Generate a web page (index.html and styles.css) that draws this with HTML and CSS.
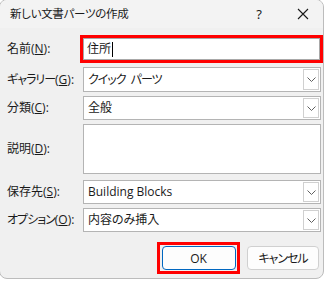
FILE: index.html
```html
<!DOCTYPE html>
<html lang="ja">
<head>
<meta charset="utf-8">
<link rel="stylesheet" href="styles.css">
</head>
<body>
<div class="window">
  <div class="titlebar">
    <span class="title">新しい文書パーツの作成</span>
    <span class="help">?</span>
    <span class="close">
      <svg width="12" height="12" viewBox="0 0 12 12"><path d="M1 1 L11 11 M11 1 L1 11" stroke="#1a1a1a" stroke-width="1.1" fill="none"/></svg>
    </span>
  </div>
  <div class="form">
    <div class="row r-name">
      <span class="label">名前(<u>N</u>):</span>
      <div class="hl-name">
        <div class="textbox"><span class="value">住所</span><span class="caret"></span></div>
      </div>
    </div>
    <div class="row r-gallery">
      <span class="label"><span class="kana">ギャラリー</span>(<u>G</u>):</span>
      <div class="combo"><span class="value kana">クイック パーツ</span><span class="drop"><svg width="9" height="5" viewBox="0 0 9 5"><path d="M0.5 0.5 L4.5 4.5 L8.5 0.5" stroke="#606060" fill="none" stroke-width="1"/></svg></span></div>
    </div>
    <div class="row r-cat">
      <span class="label">分類(<u>C</u>):</span>
      <div class="combo"><span class="value">全般</span><span class="drop"><svg width="9" height="5" viewBox="0 0 9 5"><path d="M0.5 0.5 L4.5 4.5 L8.5 0.5" stroke="#606060" fill="none" stroke-width="1"/></svg></span></div>
    </div>
    <div class="row r-desc">
      <span class="label">説明(<u>D</u>):</span>
      <div class="textarea"></div>
    </div>
    <div class="row r-save">
      <span class="label">保存先(<u>S</u>):</span>
      <div class="combo"><span class="value">Building Blocks</span><span class="drop"><svg width="9" height="5" viewBox="0 0 9 5"><path d="M0.5 0.5 L4.5 4.5 L8.5 0.5" stroke="#606060" fill="none" stroke-width="1"/></svg></span></div>
    </div>
    <div class="row r-opt">
      <span class="label"><span class="kana">オプション</span>(<u>O</u>):</span>
      <div class="combo"><span class="value">内容のみ挿入</span><span class="drop"><svg width="9" height="5" viewBox="0 0 9 5"><path d="M0.5 0.5 L4.5 4.5 L8.5 0.5" stroke="#606060" fill="none" stroke-width="1"/></svg></span></div>
    </div>
    <div class="buttons">
      <div class="hl-ok"><div class="btn ok">OK</div></div>
      <div class="btn cancel"><span class="kana">キャンセル</span></div>
    </div>
  </div>
</div>
</body>
</html>
```
FILE: styles.css
```css
html, body {
  margin: 0;
  padding: 0;
  background: #ffffff;
}
body {
  width: 328px;
  height: 281px;
  overflow: hidden;
  font-family: "Open Sans", "Noto Sans CJK JP", sans-serif;
  font-size: 12px;
  color: #1a1a1a;
  font-feature-settings: "palt";
}
.window {
  margin: -1px 0 0 -1px;
  width: 325px;
  height: 280px;
  box-sizing: border-box;
  border: 1px solid #bcbcbc;
  border-radius: 8px;
  background: #f0f0f0;
  overflow: hidden;
}
.titlebar {
  height: 28px;
  display: flex;
  align-items: center;
  background: #f3f3f3;
}
.title {
  margin-left: 10px;
  flex: 1;
  font-size: 11.5px;
  letter-spacing: -0.3px;
  line-height: 14px;
}
.help {
  width: 14px;
  text-align: center;
  font-family: "Noto Sans", sans-serif;
  font-size: 13px;
  margin-right: 31px;
}
.close {
  width: 12px;
  height: 12px;
  margin-right: 14px;
  display: flex;
}
.form {
  padding-top: 7px;
  display: flex;
  flex-direction: column;
}
.row {
  display: flex;
  align-items: center;
}
.label {
  width: 73px;
  padding-left: 7px;
  line-height: 14px;
  white-space: nowrap;
}
.kana {
  letter-spacing: -1px;
  word-spacing: 3px;
}
.r-name { height: 28px; }
.r-gallery { height: 25px; margin-top: 4px; }
.r-cat { height: 24px; margin-top: 4px; }
.r-desc { height: 50px; margin-top: 4px; }
.r-save { height: 24px; margin-top: 6px; }
.r-opt { height: 24px; margin-top: 4px; }
.hl-name {
  width: 243px;
  height: 28px;
  box-sizing: border-box;
  border: 3px solid #ff0000;
}
.textbox {
  height: 100%;
  box-sizing: border-box;
  border: 1px solid #a8a8a8;
  background: #ffffff;
  display: flex;
  align-items: center;
  padding-left: 3px;
}
.caret {
  width: 1px;
  height: 15px;
  background: #000000;
  margin-left: 1px;
}
.combo, .textarea {
  margin-left: 3px;
  width: 238px;
  height: 100%;
  box-sizing: border-box;
  border: 1px solid #b4b4b4;
  background: #ffffff;
}
.combo {
  display: flex;
  align-items: center;
  padding-left: 4px;
}
.value {
  flex: 0 0 auto;
  line-height: 14px;
}
.combo .value { flex: 1; }
.drop {
  width: 16px;
  height: calc(100% - 2px);
  margin-right: 1px;
  box-sizing: border-box;
  border: 1px solid #d0d0d0;
  background: #ffffff;
  display: flex;
  align-items: center;
  justify-content: center;
}
.buttons {
  margin-top: 10px;
  display: flex;
  align-items: center;
  padding-left: 157px;
}
.hl-ok {
  width: 83px;
  height: 32px;
  box-sizing: border-box;
  border: 3px solid #ff0000;
  display: flex;
  align-items: center;
  justify-content: center;
}
.btn {
  height: 24px;
  box-sizing: border-box;
  border-radius: 4px;
  display: flex;
  align-items: center;
  justify-content: center;
  background: #fdfdfd;
}
.ok {
  width: 74px;
  border: 1px solid #0067c0;
}
.cancel {
  width: 72px;
  margin-left: 7px;
  border: 1px solid #d0d0d0;
}
```
